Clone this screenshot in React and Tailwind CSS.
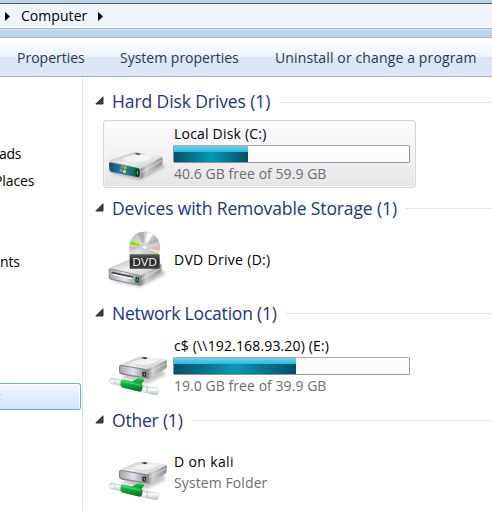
import React from 'react';

function Defs() {
  return (
    <svg className="absolute h-0 w-0" aria-hidden="true">
      <defs>
        <linearGradient id="top" x1="0" y1="0" x2="1" y2="1">
          <stop offset="0" stopColor="#b0b0b3" />
          <stop offset=".45" stopColor="#f0f0f1" />
          <stop offset="1" stopColor="#bcbcbf" />
        </linearGradient>
        <linearGradient id="side" x1="0" y1="0" x2="1" y2="0">
          <stop offset="0" stopColor="#77777b" />
          <stop offset=".3" stopColor="#d0d0d2" />
          <stop offset="1" stopColor="#8e8e92" />
        </linearGradient>
        <linearGradient id="front" x1="0" y1="0" x2="1" y2="0">
          <stop offset="0" stopColor="#a4a4a8" />
          <stop offset=".5" stopColor="#e2e2ee" />
          <stop offset="1" stopColor="#88888c" />
        </linearGradient>
        <linearGradient id="blue" x1="0" y1="0" x2="1" y2="0">
          <stop offset="0" stopColor="#1d4a68" />
          <stop offset=".45" stopColor="#267fa9" />
          <stop offset=".7" stopColor="#1f7470" />
          <stop offset="1" stopColor="#15443f" />
        </linearGradient>
        <linearGradient id="green" x1="0" y1="0" x2="0" y2="1">
          <stop offset="0" stopColor="#35d45d" />
          <stop offset=".45" stopColor="#12a83a" />
          <stop offset="1" stopColor="#04691d" />
        </linearGradient>
        <linearGradient id="glass" x1="0" y1="0" x2="0" y2="1">
          <stop offset="0" stopColor="#c3cfd1" />
          <stop offset=".4" stopColor="#ffffff" />
          <stop offset="1" stopColor="#a9bcc1" />
        </linearGradient>
        <linearGradient id="disc" x1="0" y1="0" x2="1" y2="1">
          <stop offset="0" stopColor="#b9b9b9" />
          <stop offset=".5" stopColor="#e4e4e4" />
          <stop offset="1" stopColor="#a0a0a0" />
        </linearGradient>
        <linearGradient id="label" x1="0" y1="0" x2="0" y2="1">
          <stop offset="0" stopColor="#5b5b5b" />
          <stop offset=".5" stopColor="#262626" />
          <stop offset="1" stopColor="#454545" />
        </linearGradient>
        <filter id="soft" x="-20%" y="-40%" width="140%" height="180%">
          <feGaussianBlur stdDeviation="4" />
        </filter>
        <clipPath id="discClip">
          <circle cx="164" cy="156" r="45" />
        </clipPath>
      </defs>
    </svg>
  );
}

function LocalDisk() {
  return (
    <svg className="h-[60px] w-[60px] shrink-0" viewBox="51 108 180 180">
      <path d="M62 256 L150 276 L226 236 L210 222 L100 240Z" fill="#777" opacity=".45" filter="url(#soft)" />
      <path d="M58 221 Q59 217 66 214 L125 194 Q132 191 141 193 L211 203 Q219 205 217 211 L151 247 L60 229Z" fill="url(#top)" />
      <path d="M96 213 Q120 198 160 202 L190 206 Q182 219 157 227 Q123 229 96 213Z" fill="#fff" opacity=".55" />
      <path d="M108 221 Q157 235 189 207" fill="none" stroke="#c8c8cb" strokeWidth="1.6" />
      <path d="M133 197 L141 194 L153 197 L146 202Z" fill="#55575c" />
      <path d="M148 244 L217 207 Q219 218 216 230 L157 270 Q151 275 148 270Z" fill="url(#side)" />
      <path d="M154 253 L216 217" stroke="#eee" strokeWidth="2" />
      <path d="M58 223 Q61 220 68 221 L145 239 Q153 240 153 246 L152 269 Q149 275 142 271 L65 255 Q58 253 58 247Z" fill="#b3bbc0" />
      <path d="M57 225 Q59 223 65 224 L145 241 Q150 243 150 248 L149 264 Q147 270 140 267 L66 252 Q59 250 58 244Z" fill="url(#blue)" />
      <path d="M93 234 Q97 230 101 233 L99 241 Q95 239 91 242Z" fill="#f16b36" />
      <path d="M103 234 Q107 237 111 235 L109 243 Q105 245 101 242Z" fill="#8fcb45" />
      <path d="M90 244 Q95 241 98 244 L96 252 Q92 249 88 252Z" fill="#48b4f0" />
      <path d="M100 245 Q105 248 109 246 L107 254 Q102 256 98 253Z" fill="#ffd43d" />
      <path d="M137 246 L147 248 L146 264 L137 262Z" fill="#042117" />
      <path d="M140 249 L145 250 L144 260 L140 259Z" fill="#42d832" />
    </svg>
  );
}

function DvdDrive() {
  return (
    <svg className="h-[60px] w-[60px] shrink-0" viewBox="51 108 180 180">
      <path d="M62 257 L150 276 L228 236 L210 220 L100 240Z" fill="#777" opacity=".45" filter="url(#soft)" />
      <path d="M56 223 Q58 219 66 215 L114 195 Q122 191 134 193 L207 202 Q216 204 214 211 L151 247 L58 230Z" fill="url(#top)" />
      <path d="M148 244 L214 207 Q217 218 213 232 L157 270 Q151 275 148 270Z" fill="url(#side)" />
      <path d="M154 253 L214 218" stroke="#eee" strokeWidth="2" />
      <path d="M56 223 Q59 220 66 221 L145 239 Q152 240 152 246 L151 268 Q148 274 141 271 L63 254 Q56 252 56 246Z" fill="#8a8a8e" />
      <path d="M58 226 Q61 223 67 224 L143 241 Q149 243 149 248 L148 264 Q145 269 139 267 L65 251 Q59 249 58 244Z" fill="url(#front)" />
      <path d="M64 232 Q66 229 72 231 L127 243 Q131 245 128 249 L71 237 Q65 236 64 232Z" fill="#4a4a4d" />
      <path d="M68 236 L128 249 L126 253 L70 241Z" fill="#fafafa" />
      <path d="M137 246 L147 248 L146 264 L136 262Z" fill="#173619" />
      <path d="M140 250 L144 251 L143 260 L140 259Z" fill="#39ca2f" />
      <circle cx="164" cy="156" r="45.5" fill="url(#disc)" stroke="#a0a0a0" strokeWidth="1" />
      <g clipPath="url(#discClip)">
        <path d="M164 156 L134 105 L162 105Z" fill="#777" opacity=".35" />
        <path d="M164 156 L172 107 L202 118Z" fill="#fff" opacity=".9" />
        <path d="M164 156 L194 112 L214 137Z" fill="#888" opacity=".45" />
        <path d="M164 156 L113 147 L119 136Z" fill="#6ce81b" />
        <path d="M164 156 L119 136 L126 129Z" fill="#d7df57" opacity=".8" />
        <path d="M164 156 L111 166 L113 155Z" fill="#d9a9cf" />
        <path d="M164 156 L214 158 L212 168Z" fill="#f0a4d8" />
        <path d="M164 156 L212 168 L207 178Z" fill="#f5e7a5" />
      </g>
      <circle cx="164" cy="157" r="16" fill="#d7d7d7" stroke="#bbb" />
      <circle cx="164" cy="157" r="7" fill="#fff" stroke="#999" strokeWidth="1.5" />
      <rect x="119" y="178" width="90" height="43" rx="2" fill="url(#label)" />
      <text x="164" y="212" textAnchor="middle" textLength="74" lengthAdjust="spacingAndGlyphs" fill="#f5f5f5" fontSize="33" fontFamily="Open Sans, sans-serif">DVD</text>
    </svg>
  );
}

function NetworkDrive() {
  return (
    <svg className="h-[60px] w-[60px] shrink-0" viewBox="51 108 180 180">
      <path d="M92 232 L170 252 L228 224 L215 204 L120 220Z" fill="#777" opacity=".42" filter="url(#soft)" />
      <path d="M87 198 Q89 195 96 191 L143 172 Q150 169 160 170 L222 176 Q231 178 230 184 L174 214 L88 204Z" fill="url(#top)" />
      <path d="M124 188 Q148 174 183 178 L207 181 Q198 192 176 198 Q146 201 124 188Z" fill="#f7f7f8" opacity=".65" />
      <path d="M133 193 Q180 205 208 181" fill="none" stroke="#b9b9bc" strokeWidth="1.6" />
      <path d="M154 174 L163 171 L173 174 L166 178Z" fill="#333438" />
      <path d="M169 209 L230 181 Q232 193 228 205 L180 235 Q173 239 169 235Z" fill="url(#side)" />
      <path d="M177 217 L229 190" stroke="#e8e8e8" strokeWidth="2" />
      <path d="M87 198 Q91 194 98 195 L166 207 Q174 209 174 215 L173 230 Q171 237 163 235 L96 224 Q88 222 87 216Z" fill="#85858a" />
      <path d="M90 200 Q93 197 98 198 L163 210 Q169 212 169 216 L168 227 Q165 233 160 231 L97 220 Q91 218 90 214Z" fill="url(#front)" />
      <path d="M157 215 L168 216 L167 231 L157 229Z" fill="#173018" />
      <path d="M161 219 L165 220 L165 227 L161 226Z" fill="#51b745" />
      <path d="M128 243 Q137 238 144 234 L160 237 Q166 241 158 247 L151 256 L132 254Z" fill="url(#green)" />
      <path d="M60 236 Q64 233 70 235 L97 241 L94 258 L64 251 Q55 247 58 239Z" fill="url(#glass)" stroke="#b4c1c4" strokeWidth="1.3" />
      <path d="M153 256 L202 264 Q209 267 206 277 Q204 286 197 284 L151 275Z" fill="url(#glass)" stroke="#b4c1c4" strokeWidth="1.3" />
      <path d="M173 260 Q169 269 172 278" fill="none" stroke="#8fa6aa" strokeWidth="2" />
      <path d="M76 237 Q72 244 76 253" fill="none" stroke="#a3b5b8" strokeWidth="1.5" />
      <path d="M93 240 Q97 237 104 239 L153 250 Q160 253 157 266 Q155 276 149 275 L98 263 Q91 261 91 252Z" fill="url(#green)" />
      <path d="M99 244 L151 256" stroke="#6bea87" strokeWidth="3" opacity=".65" />
    </svg>
  );
}

function Header({ children, className, label }) {
  return (
    <div className={`flex items-center pl-3 ${className}`}>
      <svg className="mb-[3px] h-[9px] w-[9px] shrink-0" viewBox="0 0 9 9">
        <path d="M8 .8 V8 H.8Z" fill="#3f3f3f" stroke="#222" strokeWidth=".9" />
      </svg>
      <span className={`mb-[2px] ml-[8px] shrink-0 whitespace-nowrap text-[17.5px] leading-6 text-[#1e3287] ${label}`}>{children}</span>
      <div className="ml-[9px] h-px flex-1 bg-[#e2e2e2]" />
    </div>
  );
}

function Bar({ fill }) {
  return (
    <div className="-ml-px my-px h-[18px] w-[237px] rounded-[2px] border border-[#929295] border-t-[#a9a9ac] bg-[#fefbff]">
      <div className={`flex h-full flex-col ${fill}`}>
        <div className="h-[6px] bg-gradient-to-b from-[#66d3ec] to-[#2fb7d9]" />
        <div className="flex-1 bg-gradient-to-r from-[#035169] via-[#0799b7] to-[#035066]" />
      </div>
    </div>
  );
}

function Item({ icon, className = 'border-transparent', text = '', children }) {
  return (
    <div className={`ml-[20px] flex h-[68px] w-[313px] shrink-0 items-center rounded-[3px] border pl-[3px] ${className}`}>
      {icon}
      <div className={`ml-[7px] flex flex-col whitespace-nowrap text-[14px] leading-5 text-black ${text}`}>{children}</div>
    </div>
  );
}

const Arrow = ({ className = '' }) => (
  <svg className={`h-[9px] w-[5px] shrink-0 ${className}`} viewBox="0 0 5 9">
    <path d="M0 0 L5 4.5 L0 9Z" fill="#000" />
  </svg>
);

export default function App() {
  return (
    <div className="relative flex h-[511px] w-[492px] flex-col overflow-hidden bg-white font-['Open_Sans','Noto_Sans',sans-serif]">
      <Defs />
      <div className="h-[3px] shrink-0 bg-[#bed2f0]" />
      <div className="flex h-[26px] shrink-0 items-center border-b border-t border-b-[#acb0bb] border-t-[#4d5763] bg-[#eef3ff] pl-[5px] shadow-[inset_0_1px_0_#fff,inset_0_-1px_0_#fff]">
        <Arrow />
        <span className="ml-[11px] w-[66px] whitespace-nowrap text-[14px] leading-5 tracking-[0.05px]">Computer</span>
        <Arrow className="ml-[11px]" />
      </div>
      <div className="h-[9px] shrink-0 border-b border-t border-b-[#a6b4cf] border-t-[#d1dff4] bg-[#bed1ef]" />
      <div className="flex h-[39px] shrink-0 items-center whitespace-nowrap border-b border-[#a4afcc] bg-[linear-gradient(to_bottom,#ffffff_0%,#f8fbff_20%,#e9f4fe_49%,#dde7f6_50%,#dce5f6_80%,#e0e9f9_100%)] pl-[17px] pt-[2px] text-[14px] leading-5 text-[#1e395b]">
        <span className="w-[103px]">Properties</span>
        <span className="w-[155px]">System properties</span>
        <span className="tracking-[0.13px]">Uninstall or change a program</span>
      </div>
      <div className="flex min-h-0 flex-1">
        <div className="flex w-[83px] shrink-0 flex-col overflow-hidden border-r border-[#d6e5f5] pt-[67px] text-[14px] leading-5">
          <span className="-ml-px whitespace-nowrap tracking-[-0.3px]">ads</span>
          <span className="-ml-[6px] mt-[7px] whitespace-nowrap tracking-[-0.1px]">Places</span>
          <span className="mt-[61px] whitespace-nowrap tracking-[-0.2px]">nts</span>
          <div className="mt-[111px] flex h-[27px] w-[81px] shrink-0 items-start rounded-r-[3px] border border-l-0 border-[#79a7d8] bg-gradient-to-b from-[#f2f7ff] to-[#d0e3ff] pt-[10px] shadow-[inset_-1px_1px_0_#f8fbff]">
            <div className="h-px w-px bg-[#63dfff]" />
          </div>
        </div>
        <div className="flex min-w-0 flex-1 flex-col pt-[7px]">
          <Header className="h-[36px]" label="tracking-[-0.1px]">Hard Disk Drives (1)</Header>
          <Item icon={<LocalDisk />} className="border-[#d7d5d9] bg-[linear-gradient(to_bottom,#fefcff_0%,#f5f4f6_40%,#ece9ed_82%,#e4e3e5_100%)] shadow-[inset_0_0_0_1px_#f6f4f7]">
            <span className="tracking-[0.2px]">Local Disk (C:)</span>
            <Bar fill="w-[74px]" />
            <span className="tracking-[0.05px] text-[#6d6d70]">40.6 GB free of 59.9 GB</span>
          </Item>
          <Header className="mt-[2px] h-[37px]" label="tracking-[-0.12px]">Devices with Removable Storage (1)</Header>
          <Item icon={<DvdDrive />} text="pb-[2px]">
            <span className="tracking-[0.3px]">DVD Drive (D:)</span>
          </Item>
          <Header className="h-[37px]" label="tracking-[-0.2px]">Network Location (1)</Header>
          <Item icon={<NetworkDrive />}>
            <span className="tracking-[0.15px]">c$ (\\192.168.93.20) (E:)</span>
            <Bar fill="w-[122px]" />
            <span className="tracking-[0.05px] text-[#6d6d70]">19.0 GB free of 39.9 GB</span>
          </Item>
          <Header className="mt-[4px] h-[33px]" label="tracking-[-0.2px]">Other (1)</Header>
          <Item icon={<NetworkDrive />} text="gap-px pt-[3px]">
            <span className="tracking-[0.35px]">D on kali</span>
            <span className="tracking-[0.1px] text-[#6d6d70]">System Folder</span>
          </Item>
        </div>
      </div>
    </div>
  );
}
